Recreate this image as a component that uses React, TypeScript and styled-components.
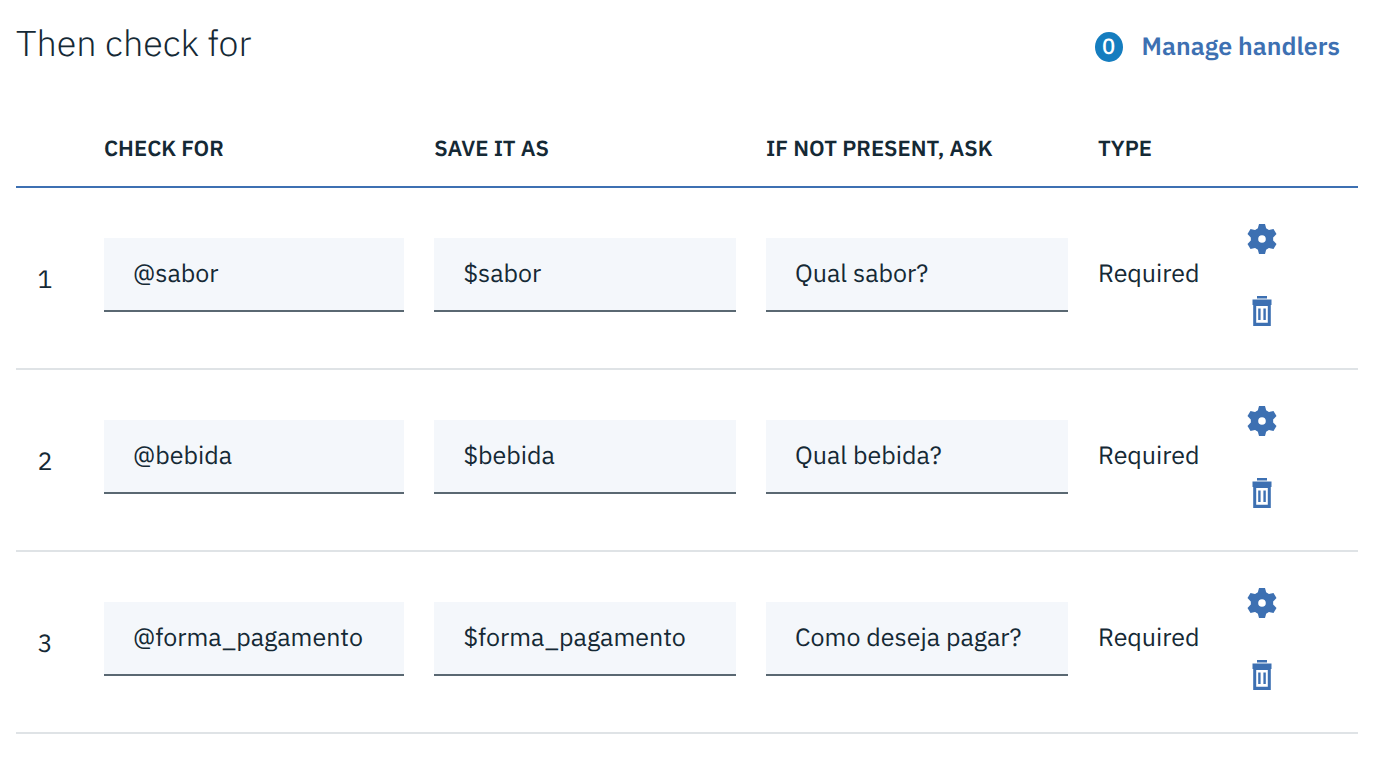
import { useState } from "react";
import styled, { createGlobalStyle } from "styled-components";

const ink = "#152935";
const blue = "#3d70b2";

const GlobalStyle = createGlobalStyle`
  * { box-sizing: border-box; }
  body {
    margin: 0;
    background: #fff;
    color: ${ink};
    font-family: "IBM Plex Sans", Roboto, sans-serif;
    text-rendering: geometricPrecision;
  }
`;

const Panel = styled.section`
  padding: 16px 24px 24px 16px;
`;

const Header = styled.header`
  display: flex;
  align-items: flex-start;
  justify-content: space-between;
  height: 56px;
  padding-right: 18px;
`;

const Title = styled.h2`
  margin: 0;
  font-size: 36px;
  line-height: 54px;
  font-weight: 300;
`;

const HandlersButton = styled.button`
  display: flex;
  align-items: flex-end;
  gap: 19px;
  padding: 14px 0 0;
  border: 0;
  background: none;
  color: ${blue};
  font: inherit;
  text-rendering: inherit;
  font-size: 25px;
  line-height: 32px;
  font-weight: 600;
  cursor: pointer;
`;

const Badge = styled.span`
  width: 28px;
  height: 30px;
  border-radius: 50%;
  background: #157dbf;
  color: #fff;
  font-size: 22px;
  line-height: 30px;
  font-weight: 500;
  text-align: center;
`;

const SlotTable = styled.table`
  width: 100%;
  margin-top: 36px;
  table-layout: fixed;
  border-collapse: separate;
  border-spacing: 0;
`;

const Col = styled.col<{ $width?: string }>`
  width: ${({ $width = "auto" }) => $width};
`;

const HeadCell = styled.th`
  height: 80px;
  padding: 4px 0 0;
  border-bottom: 2px solid ${blue};
  font-size: 22px;
  line-height: 32px;
  font-weight: 600;
  text-align: left;
  text-transform: uppercase;
  white-space: nowrap;
`;

const Cell = styled.td<{ $top?: number }>`
  height: 182px;
  padding: ${({ $top = 50 }) => $top}px 30px 0 0;
  border-bottom: 2px solid #dfe3e6;
  vertical-align: top;
  font-size: 25px;
  line-height: 70px;
`;

const NumberCell = styled(Cell)`
  padding: 2px 30px 0 0;
  vertical-align: middle;
  text-align: center;
`;

const Field = styled.input`
  display: block;
  width: 100%;
  height: 74px;
  padding: 0 29px 4px;
  border: 0;
  border-bottom: 2px solid #5a6872;
  border-radius: 0;
  background: #f4f7fb;
  color: ${ink};
  font: inherit;
  text-rendering: inherit;
  font-size: 25px;
  line-height: 32px;
  outline: 0;
`;

const Actions = styled.div`
  display: flex;
  flex-direction: column;
  align-items: flex-start;
  gap: 42px;
`;

const IconButton = styled.button`
  display: block;
  width: 36px;
  height: 30px;
  padding: 0;
  border: 0;
  background: none;
  color: ${blue};
  line-height: 0;
  cursor: pointer;
`;

function GearIcon() {
  return (
    <svg width="30" height="30" viewBox="-15 -15 30 30" fill="currentColor" aria-hidden="true">
      {[0, 60, 120, 180, 240, 300].map((angle) => (
        <path key={angle} d="M-3-15H3L4.5-9.5H-4.5Z" transform={`rotate(${angle})`} />
      ))}
      <path
        fillRule="evenodd"
        d="M0-11.2A11.2 11.2 0 0 1 0 11.2A11.2 11.2 0 0 1 0-11.2ZM0-3.8A3.8 3.8 0 0 0 0 3.8A3.8 3.8 0 0 0 0-3.8Z"
      />
    </svg>
  );
}

function TrashIcon() {
  return (
    <svg width="20" height="30" viewBox="0 0 20 30" fill="currentColor" aria-hidden="true">
      <path d="M5 0H15V2.4H5ZM.5 3.5H19.5V9H.5Z" />
      <path fillRule="evenodd" d="M1.2 9H18.8V30H1.2ZM4.2 10V26.8H15.8V10Z" />
      <path d="M6.2 12.5H8.6V24H6.2ZM11.4 12.5H13.8V24H11.4Z" />
    </svg>
  );
}

const slots = [
  { check: "@sabor", save: "$sabor", ask: "Qual sabor?" },
  { check: "@bebida", save: "$bebida", ask: "Qual bebida?" },
  { check: "@forma_pagamento", save: "$forma_pagamento", ask: "Como deseja pagar?" },
];

const fields = [
  { key: "check", label: "Check for" },
  { key: "save", label: "Save it as" },
  { key: "ask", label: "If not present, ask" },
] as const;

export default function App() {
  const [rows, setRows] = useState(slots);

  const update = (index: number, key: string, value: string) =>
    setRows(rows.map((row, i) => (i === index ? { ...row, [key]: value } : row)));

  return (
    <>
      <GlobalStyle />
      <Panel>
        <Header>
          <Title>Then check for</Title>
          <HandlersButton type="button">
            <Badge>0</Badge>
            Manage handlers
          </HandlersButton>
        </Header>
        <SlotTable>
          <colgroup>
            <Col $width="88px" />
            <Col $width="24.6%" />
            <Col />
            <Col />
            <Col $width="146px" />
            <Col $width="114px" />
          </colgroup>
          <thead>
            <tr>
              <HeadCell />
              {fields.map(({ key, label }) => (
                <HeadCell key={key} scope="col">{label}</HeadCell>
              ))}
              <HeadCell scope="col">Type</HeadCell>
              <HeadCell />
            </tr>
          </thead>
          <tbody>
            {rows.map((row, index) => (
              <tr key={index}>
                <NumberCell>{index + 1}</NumberCell>
                {fields.map(({ key, label }) => (
                  <Cell key={key}>
                    <Field
                      type="text"
                      aria-label={label}
                      value={row[key]}
                      onChange={(event) => update(index, key, event.target.value)}
                    />
                  </Cell>
                ))}
                <Cell>Required</Cell>
                <Cell $top={36}>
                  <Actions>
                    <IconButton type="button" aria-label="Edit slot">
                      <GearIcon />
                    </IconButton>
                    <IconButton type="button" aria-label="Delete slot">
                      <TrashIcon />
                    </IconButton>
                  </Actions>
                </Cell>
              </tr>
            ))}
          </tbody>
        </SlotTable>
      </Panel>
    </>
  );
}
